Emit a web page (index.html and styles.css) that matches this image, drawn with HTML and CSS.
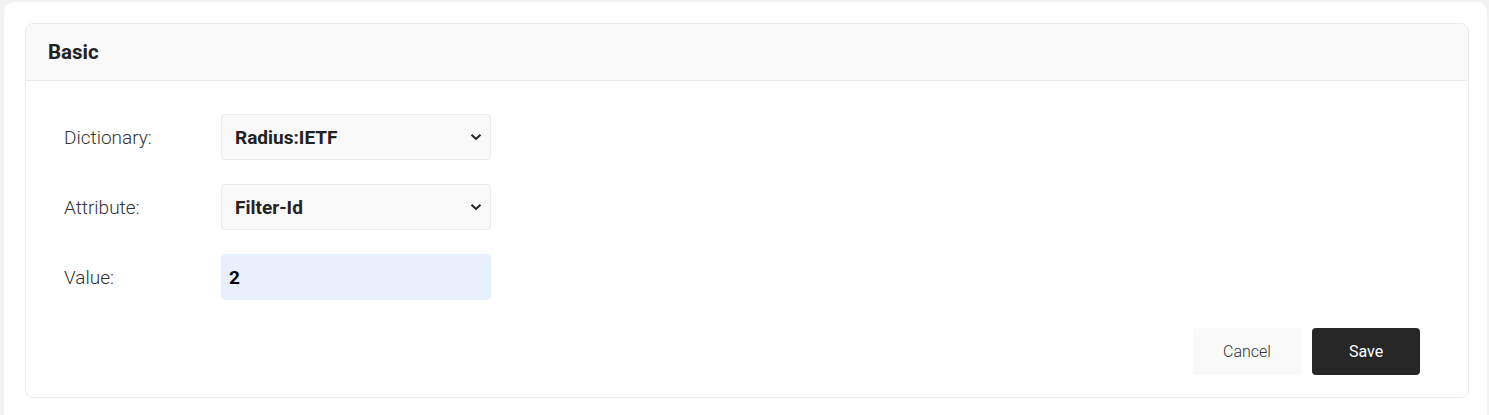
FILE: index.html
```html
<!DOCTYPE html>
<html>
<head>
<meta charset="utf-8">
<link rel="stylesheet" href="styles.css">
</head>
<body>
<div class="panel">
  <div class="card">
    <div class="card-header">Basic</div>
    <div class="card-body">
      <div class="row">
        <label class="label">Dictionary:</label>
        <div class="select">
          <span>Radius:IETF</span>
          <svg class="chev" width="12" height="8" viewBox="0 0 12 8"><path d="M1.5 1.8 L6 6 L10.5 1.8" fill="none" stroke="#222" stroke-width="2"/></svg>
        </div>
      </div>
      <div class="row">
        <label class="label">Attribute:</label>
        <div class="select">
          <span>Filter-Id</span>
          <svg class="chev" width="12" height="8" viewBox="0 0 12 8"><path d="M1.5 1.8 L6 6 L10.5 1.8" fill="none" stroke="#222" stroke-width="2"/></svg>
        </div>
      </div>
      <div class="row">
        <label class="label">Value:</label>
        <div class="input"><span>2</span></div>
      </div>
      <div class="actions">
        <button class="btn btn-cancel">Cancel</button>
        <button class="btn btn-save">Save</button>
      </div>
    </div>
  </div>
</div>
</body>
</html>
```
FILE: styles.css
```css
html, body {
  margin: 0;
  padding: 0;
  background: #f2f2f2;
  font-family: Roboto, "Liberation Sans", sans-serif;
  overflow: hidden;
}
body {
  padding: 2px 2px 0 4px;
}
.panel {
  background: #fff;
  border-radius: 10px 10px 0 0;
  padding: 21px 18px 40px 21px;
  height: 420px;
  box-sizing: border-box;
}
.card {
  border: 1px solid #ebebeb;
  border-radius: 8px;
  overflow: hidden;
}
.card-header {
  background: #f9f9f9;
  border-bottom: 1px solid #ebebeb;
  height: 57px;
  box-sizing: border-box;
  padding-left: 22px;
  padding-bottom: 1px;
  display: flex;
  align-items: center;
  font-weight: 700;
  font-size: 20.5px;
  color: #222;
}
.card-body {
  padding: 33px 48px 22px 38px;
  display: flex;
  flex-direction: column;
  gap: 24px;
}
.row {
  display: flex;
  align-items: center;
}
.label {
  width: 157px;
  font-size: 19px;
  font-weight: 300;
  color: #333;
}
.select, .input {
  width: 270px;
  height: 46px;
  box-sizing: border-box;
  border: 1px solid #ebebeb;
  border-radius: 4px;
  background: #f9f9f9;
  display: flex;
  align-items: center;
  justify-content: space-between;
  padding: 0 8px 0 13px;
  font-size: 19px;
  font-weight: 700;
  color: #222;
}
.input {
  background: #e8f0fe;
  border-color: #e8f0fe;
  padding-left: 7px;
  color: #000;
}
.chev {
  display: block;
}
.actions {
  display: flex;
  justify-content: flex-end;
  gap: 11px;
  margin-top: 4px;
}
.btn {
  width: 108px;
  height: 47px;
  border: none;
  border-radius: 4px;
  padding-bottom: 2px;
  font-family: Roboto, "Liberation Sans", sans-serif;
  font-size: 16px;
}
.btn-cancel {
  background: #f9f9f9;
  color: #333;
  font-weight: 300;
}
.btn-save {
  background: #262626;
  color: #fff;
  font-weight: 400;
}
```
